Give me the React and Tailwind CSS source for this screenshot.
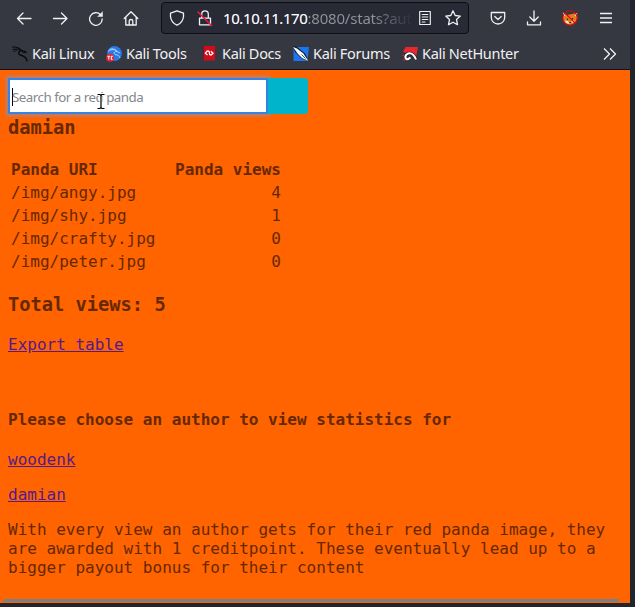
const stroke = {
  fill: "none",
  stroke: "#f1f1f3",
  strokeWidth: 1.3,
  strokeLinecap: "round",
  strokeLinejoin: "round",
};

function Icon({ className = "", children }) {
  return (
    <svg viewBox="0 0 16 16" className={"block h-4 w-4 shrink-0 " + className} {...stroke}>
      {children}
    </svg>
  );
}

const KaliDragon = () => (
  <svg viewBox="0 0 16 16" className="block h-4 w-4 shrink-0" fill="none" stroke="#08090b" strokeLinecap="round" strokeLinejoin="round">
    <path d="M.5 1C4 .7 7.500 1.800 9.500 4.500" strokeWidth="1.100" />
    <path d="M1 3.500C4 2.600 7 3 9.500 4.500L12.800 5.200L14.200 6.500L11 6.300L9.500 4.500" strokeWidth="1.100" />
    <path d="M9.500 4.600C6.500 4.800 5.800 7.300 7.600 8.700C9.800 10 14 9.200 15 14.800" strokeWidth="1.400" />
    <path d="M1.500 5.500L5 4.300" strokeWidth=".7" />
  </svg>
);

const KaliTools = () => (
  <svg viewBox="0 0 16 16" className="block h-4 w-4 shrink-0">
    <circle cx="8.500" cy="7.500" r="7.400" fill="#257be8" />
    <path d="M2 5.500C5.500 2.500 9.500 3.500 11 5.500L14 7M3.500 3.500C7 2 10 3.500 11 5.500C8 5.200 7.500 7.500 9 8.500C11.500 9 13.500 9.500 14 12" stroke="#b9d7ff" strokeWidth=".9" fill="none" />
    <circle cx="4.100" cy="11.800" r="4" fill="#df2632" />
    <path d="M1.500 10.300H4.100M2.800 10.300V13.500M5.200 10.300H6.800M5.300 10.300V13.500M5.300 13.400H6.500" stroke="#fff" strokeWidth="1" fill="none" />
  </svg>
);

const KaliDocs = () => (
  <svg viewBox="0 0 16 16" className="block h-4 w-4 shrink-0">
    <path d="M1.500 0H13V14H1.500Z" fill="#d30b18" />
    <path d="M.7 0H2V15H.7Z" fill="#5e1f35" />
    <path d="M1 14.400H13" stroke="#72283c" strokeWidth="1.200" />
    <path d="M5.200 5L3.400 7.200L5.500 9M8.800 5.200L11 7.200L8.800 9.200M5.200 5C9.500 4.800 5.500 8.500 8.800 9.200" fill="none" stroke="#fff" strokeWidth="1.300" />
  </svg>
);

const KaliForums = () => (
  <svg viewBox="0 0 16 16" className="block h-4 w-4 shrink-0">
    <path d="M.5 1H16L14.500 15H.5Z" fill="#1976ef" />
    <path d="M0 0L4 1L12 7.500L16 15.500L8 12L2 6Z" fill="#111722" />
    <path d="M0 1L4 2.500L10.500 7.500L12 10L15.500 15L9 12L4.500 7.500Z" fill="#f3f7fb" />
    <path d="M8.500 8.500L12.500 12.500" stroke="#252b35" strokeWidth=".8" />
  </svg>
);

const KaliHunter = () => (
  <svg viewBox="0 0 16 16" className="block h-4 w-4 shrink-0">
    <path d="M3.500 1H16L14 11L10 9L1 6Z" fill="#ea2630" />
    <path d="M14 13.500C12.500 9.500 9.500 6.300 6 7.600C2.500 9 2.500 13.500 6 13.200L8.500 11.500" fill="none" stroke="#15171e" strokeWidth="3.300" />
    <path d="M14 13.500C12.500 9.500 9.500 6.300 6 7.600C2.500 9 2.500 13.500 6 13.200L8.500 11.500" fill="none" stroke="#fff" strokeWidth="2.100" />
    <path d="M.5 9L2 10M1 13L3 14.500" stroke="#c8272f" strokeWidth="1.200" />
  </svg>
);

const FoxBlocked = () => (
  <svg viewBox="0 0 16 16" className="block h-4 w-4 shrink-0">
    <path d="M1 2.500L5 5L10 4L15 3L15.500 8L13 13L8 15L3.500 13.500L1 10Z" fill="#e77b1b" />
    <path d="M.8 2.500L3.500 5L1.500 7ZM15.200 3L12.500 5L14.500 7ZM3 10.500L6 11L7.500 14L4 13ZM12 10L9.500 11L10 13L12.500 12Z" fill="#f6e3d2" />
    <path d="M5.500 8.500V10M10.500 8V9.500M7.500 12.500H9" stroke="#34251d" strokeWidth="1.200" />
    <circle cx="8" cy="8" r="7.200" fill="none" stroke="#d30c10" strokeWidth="1.100" />
    <path d="M3 3L13 13" stroke="#d30c10" strokeWidth="1.100" />
  </svg>
);

const bookmarks = [
  { label: "Kali Linux", icon: KaliDragon, width: "w-[94px]" },
  { label: "Kali Tools", icon: KaliTools, width: "w-[96px]" },
  { label: "Kali Docs", icon: KaliDocs, width: "w-[91px]" },
  { label: "Kali Forums", icon: KaliForums, width: "w-[109px]" },
  { label: "Kali NetHunter", icon: KaliHunter, width: "w-[130px]" },
];

const rows = [
  ["/img/angy.jpg", 4],
  ["/img/shy.jpg", 1],
  ["/img/crafty.jpg", 0],
  ["/img/peter.jpg", 0],
];

function Toolbar() {
  return (
    <div className="flex h-9 items-center pl-4">
      <Icon><path d="M15 8.500H1.500M7 3L1.500 8.500L7 14" /></Icon>
      <Icon className="ml-5"><path d="M1.500 8.500H15M9.500 3L15 8.500L9.500 14" /></Icon>
      <Icon className="ml-5">
        <path d="M14.200 9A6.300 6.300 0 1 1 12.500 4.700" />
        <path d="M14.500 2V6.500H10Z" fill="#f1f1f3" strokeWidth=".5" />
      </Icon>
      <Icon className="ml-[19px]">
        <path d="M1.200 8.500L8 1.700L14.800 8.500M2.800 7V15H13.200V7M6.200 15V11Q6.200 9.500 8 9.500Q9.800 9.500 9.800 11V15" />
      </Icon>
      <div className="ml-[22px] flex h-8 w-[308px] items-center rounded border border-[#0d0e13] bg-[#282a35] pl-[7px]">
        <Icon><path d="M8 .8L14.500 3.200V6.500Q14 12.500 8 15.200Q2 12.500 1.500 6.500V3.200Z" /></Icon>
        <Icon className="ml-3">
          <path d="M4.700 8V4.200A3.300 3.300 0 0 1 11.300 4.200V8M2.500 8.200H13.500V14.800H2.500Z" />
          <path d="M1 2L14.500 15.500" stroke="#ec183b" strokeWidth="1.500" />
        </Icon>
        <div className="ml-[10px] w-[192px] bg-linear-to-r from-[#92939a] from-78% to-[#2e303b] to-98% bg-clip-text text-[15px] leading-6 whitespace-nowrap text-transparent">
          <span className="tracking-[-0.4px] text-[#fbfbfe]">10.10.11.170</span>
          <span className="tracking-[-0.2px]">:8080/stats?aut</span>
        </div>
        <Icon className="ml-0.5"><path d="M2.700 1.500H13.300V14.500H2.700ZM5.200 4.500H10.800M5.200 7H10.800M5.200 9.500H10.800M5.200 12H8" strokeWidth="1.150" /></Icon>
        <Icon className="ml-3"><path d="M8 .8L10.200 5.500L15.300 6.100L11.500 9.600L12.500 14.700L8 12.200L3.500 14.700L4.500 9.600L.7 6.100L5.800 5.500Z" /></Icon>
      </div>
      <Icon className="ml-[21px]"><path d="M1.300 2.500H14.700V7.500A6.700 6.500 0 0 1 1.300 7.500ZM4.800 6.500L8 9.500L11.200 6.500" /></Icon>
      <Icon className="ml-5"><path d="M8 .8V11M3.800 7L8 11.200L12.200 7M1.500 12V14.800H14.500V12" /></Icon>
      <div className="ml-5"><FoxBlocked /></div>
      <Icon className="ml-5"><path d="M2 3.500H14M2 8H14M2 12.500H14" strokeLinecap="butt" /></Icon>
    </div>
  );
}

export default function App() {
  return (
    <div className="h-[607px] w-[635px] overflow-hidden bg-[#23252e] pr-[5px]">
      <header className="h-[70px] border-b border-[#111217] bg-[#353841] font-['Noto_Sans',sans-serif]">
        <Toolbar />
        <nav className="flex h-[33px] items-center pt-[3px] pl-3 text-[14.5px] tracking-[-0.3px] text-[#f1f1f3]">
          {bookmarks.map(({ label, icon: Mark, width }) => (
            <div key={label} className={"flex shrink-0 items-center gap-1 whitespace-nowrap " + width}>
              <Mark />
              <span>{label}</span>
            </div>
          ))}
          <Icon className="ml-[70px]"><path d="M2 2.500L7.500 8L2 13.500M8 2.500L13.500 8L8 13.500" strokeLinecap="butt" /></Icon>
        </nav>
      </header>

      <main className="flex h-[533px] flex-col bg-[#ff6400] pt-2 pl-2 font-['DejaVu_Sans_Mono',monospace] text-base leading-[19px] text-[#662800]">
        <div className="flex h-9">
          <div className="relative flex w-[260px] shrink-0 items-center rounded-[1px] border-2 border-[#3584e4] bg-white pt-0.5 pl-0.5 font-['Noto_Sans',sans-serif] text-[13.33px] tracking-[-0.5px] text-[#85878b] ring-3 ring-[#cc7754]">
            <span className="h-[18px] w-px bg-black" />
            <span className="-ml-px whitespace-nowrap">Search for a red panda</span>
            <svg viewBox="0 0 10 18" className="absolute top-[13px] left-[86px] h-[18px] w-[10px]">
              <path d="M1.500 1.500H4L5 2.500L6 1.500H8.500M5 2.500V14.500M1.500 15.500H4L5 14.500L6 15.500H8.500" fill="none" stroke="white" strokeWidth="3" />
              <path d="M1.500 1.500H4L5 2.500L6 1.500H8.500M5 2.500V14.500M1.500 15.500H4L5 14.500L6 15.500H8.500" fill="none" stroke="black" strokeWidth="1.200" />
            </svg>
          </div>
          <button className="relative z-10 w-10 rounded-r bg-[#00b4cc]" aria-label="Search" />
        </div>
        <h3 className="mt-[3px] text-[18.72px] leading-[22px] font-bold">damian</h3>
        <table className="mt-[18px] w-[276px] border-separate border-spacing-0.5">
          <thead>
            <tr>
              <th className="p-px text-left">Panda URI</th>
              <th className="p-px text-right">Panda views</th>
            </tr>
          </thead>
          <tbody>
            {rows.map(([uri, views]) => (
              <tr key={uri}>
                <td className="p-px">{uri}</td>
                <td className="p-px text-right">{views}</td>
              </tr>
            ))}
          </tbody>
        </table>
        <h3 className="mt-5 text-[18.72px] leading-[22px] font-bold">Total views: 5</h3>
        <p className="mt-[19px] text-[#551a8b]"><a className="underline">Export table</a></p>
        <h4 className="mt-14 font-bold">Please choose an author to view statistics for</h4>
        <p className="mt-[21px] text-[#551a8b]"><a className="underline">woodenk</a></p>
        <p className="mt-4 text-[#551a8b]"><a className="underline">damian</a></p>
        <p className="mt-4 w-[614px]">
          With every view an author gets for their red panda image, they are awarded with 1 creditpoint. These eventually lead up to a bigger payout bonus for their content
        </p>
        <div className="mt-auto mb-[1px] -ml-[5px] h-[3px] w-[616px] bg-[#7f7f7f]" />
      </main>
    </div>
  );
}
